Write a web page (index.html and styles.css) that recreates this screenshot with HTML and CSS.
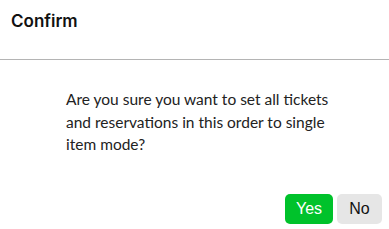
FILE: index.html
```html
<!DOCTYPE html>
<html lang="en">
<head>
  <meta charset="UTF-8">
  <meta name="viewport" content="width=device-width, initial-scale=1.0">
  <title>Confirm</title>
  <link rel="stylesheet" href="styles.css">
</head>
<body>

  <div class="dialog">
    <div class="dialog-header">
      <h2>Confirm</h2>
    </div>
    <div class="dialog-body">
      <p>Are you sure you want to set all tickets and reservations in this order to single item mode?</p>
    </div>
    <div class="dialog-footer">
      <button type="button" class="btn btn-yes">Yes</button>
      <button type="button" class="btn btn-no">No</button>
    </div>
  </div>

</body>
</html>
```

FILE: styles.css
```css
body {
  font-family: 'Inter', 'Noto Sans', sans-serif;
  background-color: #fff;
  margin: 0;
  color: #222;
}

.dialog {
  width: 389px;
  height: 229px;
  display: flex;
  flex-direction: column;
}

.dialog-header {
  height: 60px;
  border-bottom: 1px solid #b4b4b4;
  padding: 9px 11px 0;
  box-sizing: border-box;
}

.dialog-header h2 {
  margin: 0;
  font-size: 17px;
  font-weight: 600;
  line-height: 24px;
  color: #111;
}

.dialog-body {
  padding: 28px 40px 0 66px;
}

.dialog-body p {
  margin: 0;
  font-family: 'Lato', sans-serif;
  font-size: 15.5px;
  line-height: 22.5px;
  color: #222;
}

.dialog-footer {
  margin-top: auto;
  display: flex;
  justify-content: flex-end;
  gap: 4px;
  padding: 0 7px 5px 0;
}

.btn {
  font-family: 'Liberation Sans', Arial, sans-serif;
  font-size: 16px;
  height: 30px;
  padding: 0;
  border: none;
  border-radius: 5px;
  cursor: pointer;
}

.btn-yes {
  background-color: #00c22b;
  color: #fff;
  width: 48px;
}

.btn-no {
  background-color: #e6e6e6;
  color: #111;
  width: 45px;
}
```
